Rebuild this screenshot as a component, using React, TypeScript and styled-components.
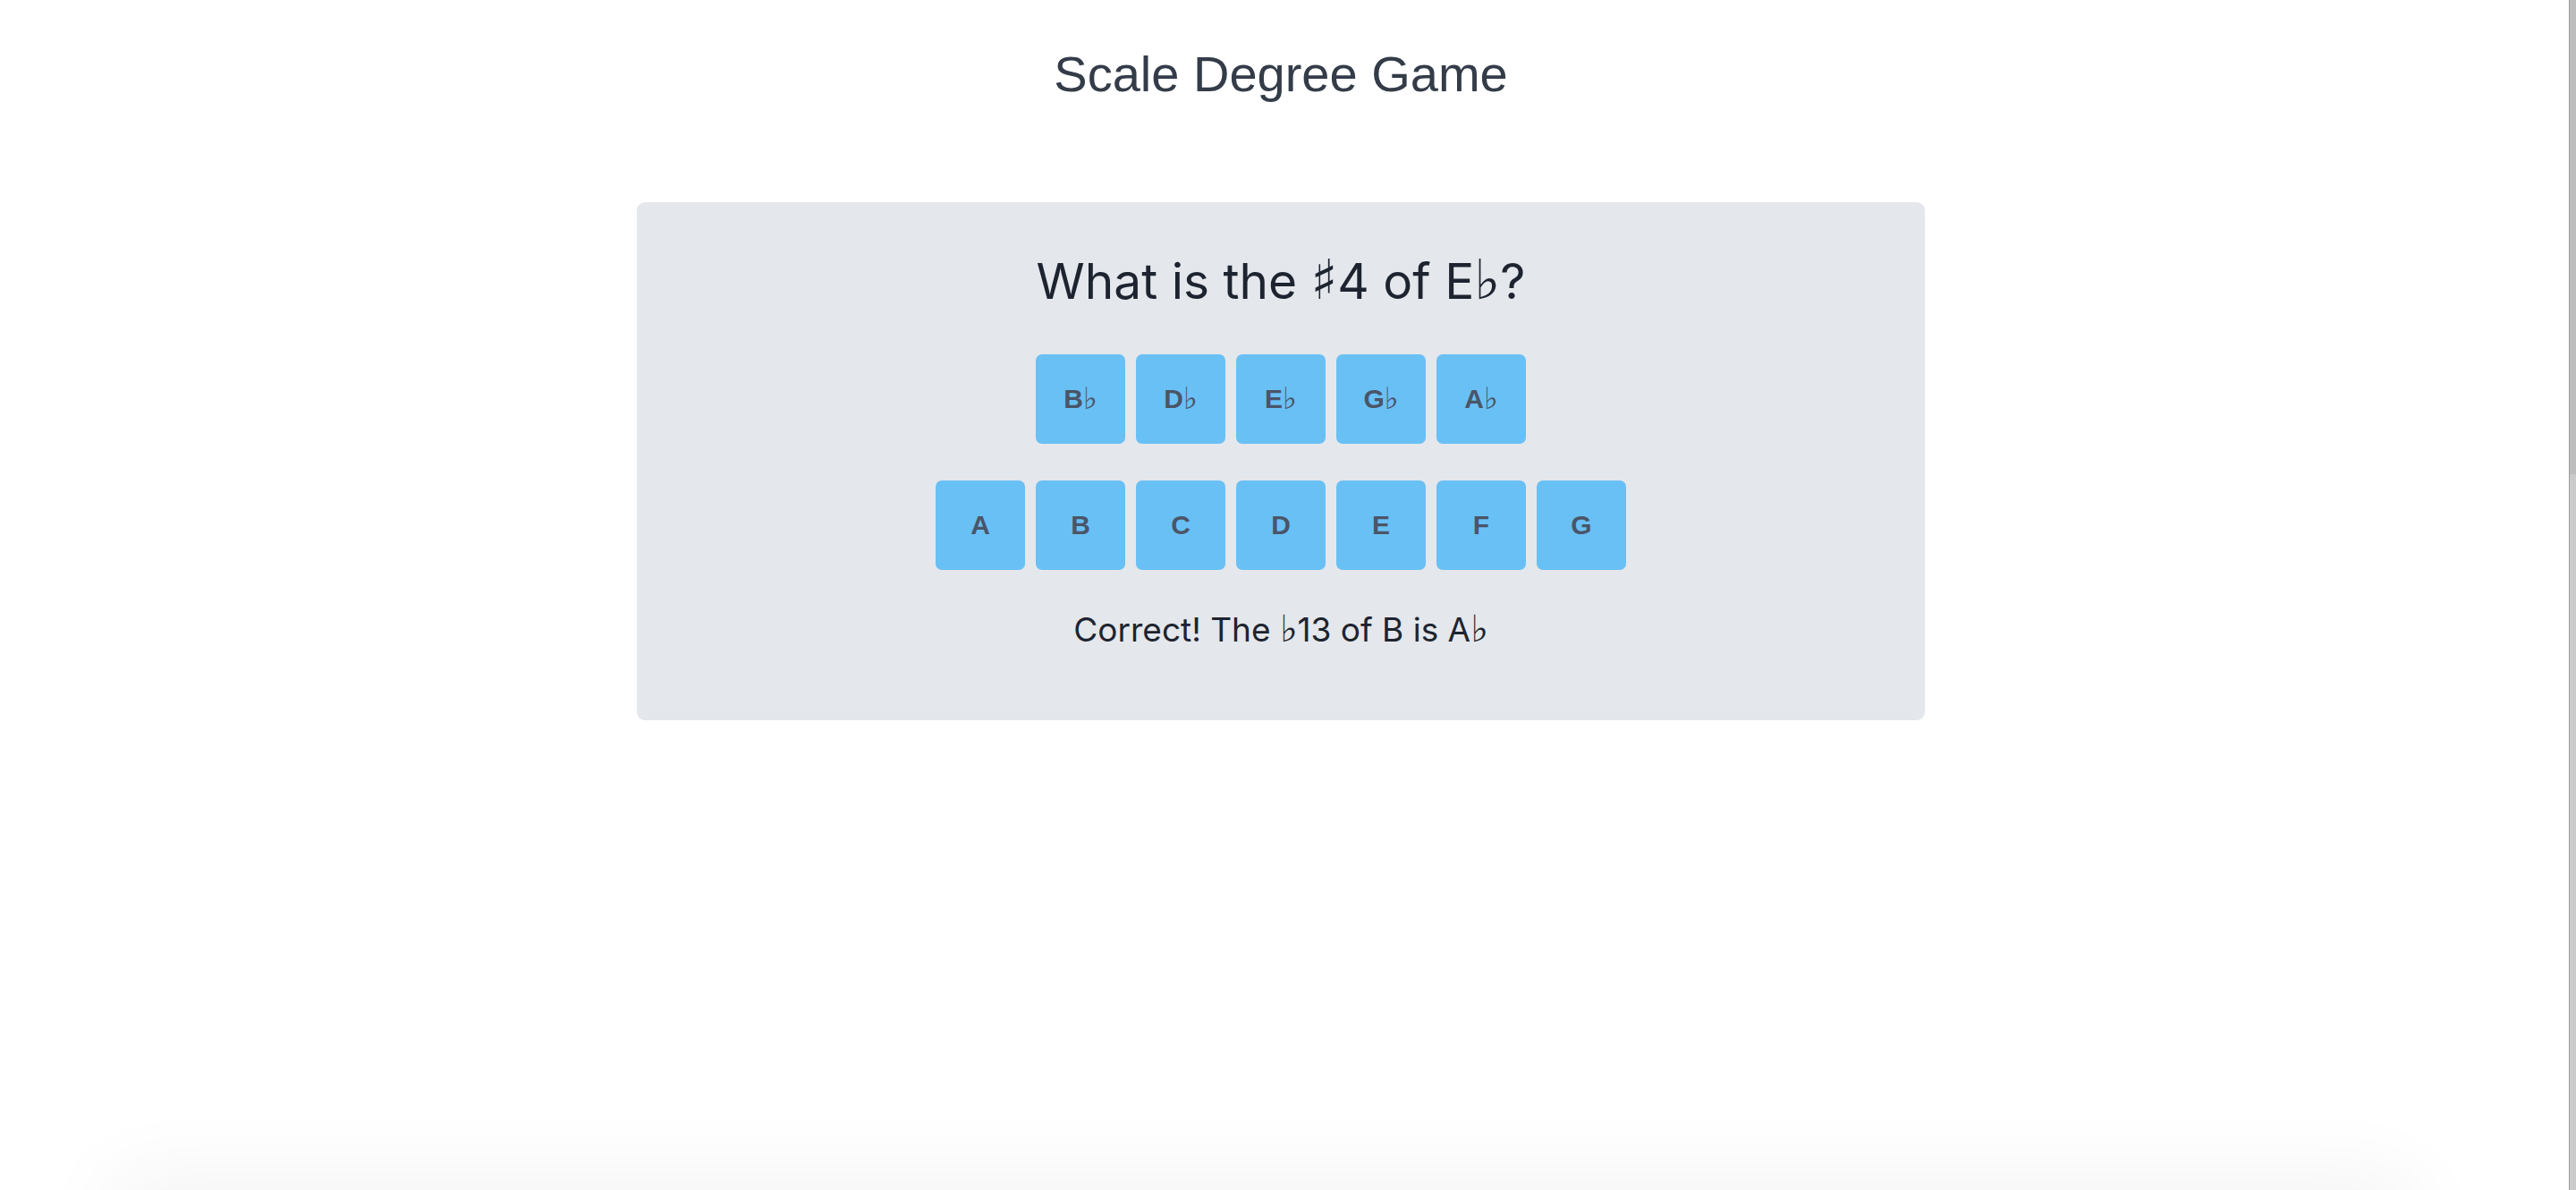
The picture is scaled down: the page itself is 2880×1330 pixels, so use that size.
import React from "react";
import styled, { createGlobalStyle } from "styled-components";

const GlobalStyle = createGlobalStyle`
  html, body {
    margin: 0;
    padding: 0;
    background: #ffffff;
  }
  body {
    font-family: Inter, "Noto Sans", "DejaVu Sans", sans-serif;
    overflow: hidden;
  }
`;

const Page = styled.div`
  display: flex;
  min-height: 100vh;
  position: relative;
  overflow: hidden;
`;

const Main = styled.main`
  flex: 1;
  display: flex;
  flex-direction: column;
  align-items: center;
  padding-right: 8px;
`;

const ScrollStrip = styled.div`
  width: 8px;
  flex: 0 0 8px;
  background: linear-gradient(
    to bottom,
    #bdbdbd 0,
    #bdbdbd 530px,
    #cbcbcb 530px,
    #cbcbcb 100%
  );
  border-left: 1px solid #9c9c9c;
  box-sizing: border-box;
`;

const BottomShade = styled.div`
  position: absolute;
  left: 130px;
  right: 190px;
  bottom: -60px;
  height: 60px;
  border-radius: 60px;
  box-shadow: 0 0 90px 16px rgba(0, 0, 0, 0.05);
  pointer-events: none;
`;

const Title = styled.h1`
  margin: 49px 0 0;
  font-family: "Liberation Sans", Arial, sans-serif;
  font-weight: 400;
  font-size: 56px;
  line-height: 67px;
  color: #333c48;
`;

const Card = styled.section`
  margin-top: 110px;
  width: 1440px;
  box-sizing: border-box;
  background: #e4e7eb;
  border-radius: 9px;
  padding: 52px 0 77px;
  display: flex;
  flex-direction: column;
  align-items: center;
`;

const Question = styled.h2`
  margin: 0;
  font-family: Inter, "DejaVu Sans", sans-serif;
  font-weight: 400;
  font-size: 55px;
  line-height: 72px;
  color: #1d2430;
`;

const Accidental = styled.span`
  font-family: "DejaVu Sans", sans-serif;
  font-weight: 700;
  font-size: 1.12em;
  line-height: 1;
`;

const KeyRow = styled.div<{ $mt: number }>`
  display: flex;
  gap: 12px;
  margin-top: ${(p) => p.$mt}px;
`;

const NoteButton = styled.button`
  width: 100px;
  height: 100px;
  border: none;
  border-radius: 7px;
  background: #69c0f4;
  color: #4a5568;
  font-family: "Liberation Sans", Arial, sans-serif;
  font-weight: 700;
  font-size: 30px;
  line-height: 1;
  display: flex;
  align-items: center;
  justify-content: center;
  padding: 0;
  cursor: pointer;
`;

const Feedback = styled.p`
  margin: 43px 0 0;
  font-family: Inter, "DejaVu Sans", sans-serif;
  font-weight: 400;
  font-size: 37px;
  line-height: 48px;
  color: #1d2430;
`;

const withAccidentals = (s: string) => {
  const parts = s.split(/([♭♯])/);
  return parts.map((p, i) =>
    p === "♭" || p === "♯" ? (
      <Accidental key={i}>{p}</Accidental>
    ) : (
      <React.Fragment key={i}>{p}</React.Fragment>
    )
  );
};

const flats = ["B♭", "D♭", "E♭", "G♭", "A♭"];
const naturals = ["A", "B", "C", "D", "E", "F", "G"];

export default function App() {
  return (
    <>
      <GlobalStyle />
      <Page>
        <Main>
          <Title>Scale Degree Game</Title>
          <Card>
            <Question>{withAccidentals("What is the ♯4 of E♭?")}</Question>
            <KeyRow $mt={46}>
              {flats.map((n) => (
                <NoteButton key={n}>{withAccidentals(n)}</NoteButton>
              ))}
            </KeyRow>
            <KeyRow $mt={41}>
              {naturals.map((n) => (
                <NoteButton key={n}>{n}</NoteButton>
              ))}
            </KeyRow>
            <Feedback>{withAccidentals("Correct! The ♭13 of B is A♭")}</Feedback>
          </Card>
        </Main>
        <ScrollStrip />
        <BottomShade />
      </Page>
    </>
  );
}
